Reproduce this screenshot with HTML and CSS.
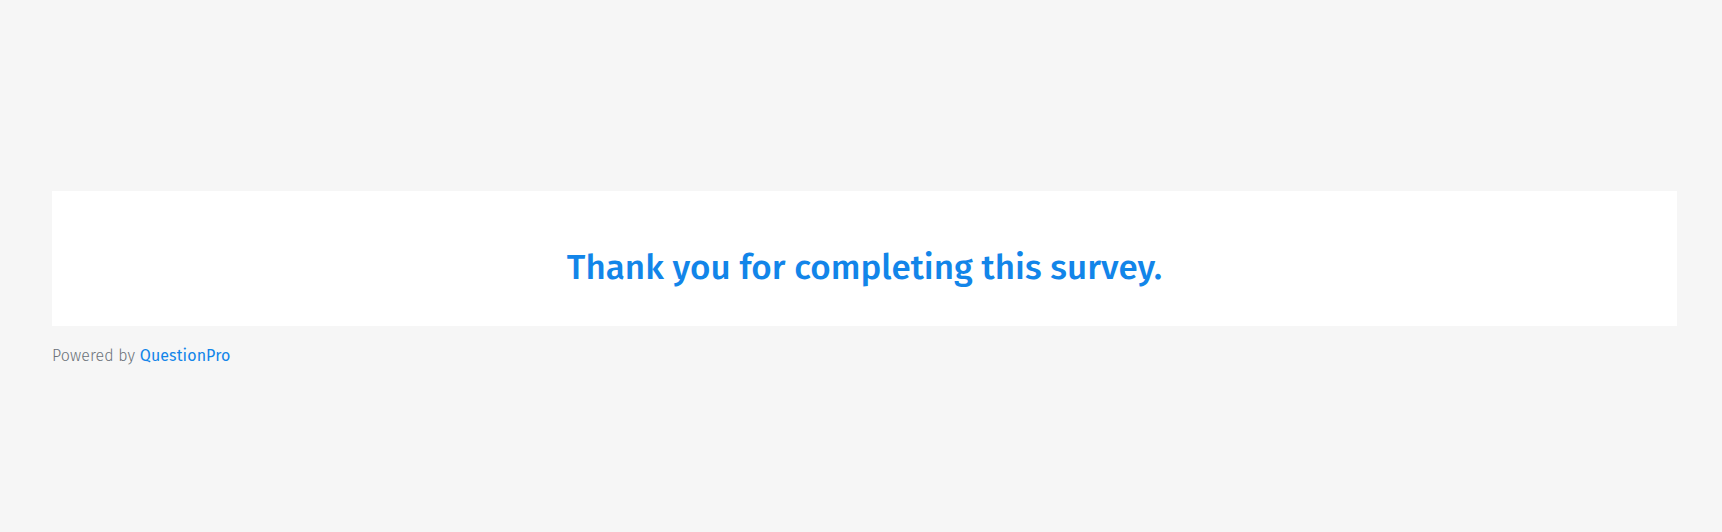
FILE: index.html
```html
<!DOCTYPE html>
<html lang="en">
<head>
  <meta charset="UTF-8" />
  <meta name="viewport" content="width=device-width, initial-scale=1.0"/>
  <title>Survey Complete</title>
  <link rel="stylesheet" href="styles.css">
</head>
<body>
  <div class="page">
    <div class="card">
      <h1 class="thanks">Thank you for completing this survey.</h1>
    </div>
    <p class="powered">Powered by <a href="#" class="brand">QuestionPro</a></p>
  </div>
</body>
</html>
```

FILE: styles.css
```css
* {
  box-sizing: border-box;
}
body {
  margin: 0;
  font-family: "Fira Sans", Lato, "Open Sans", sans-serif;
  background: #f6f6f6;
  color: #333;
}

.page {
  padding: 191px 45px 0 52px;
}

.card {
  background: #fff;
  padding: 56px 20px 39px;
}

.thanks {
  margin: 0;
  font-size: 35px;
  line-height: 40px;
  font-weight: 500;
  color: #1285e9;
  text-align: center;
}

.powered {
  margin: 19px 0 0;
  font-size: 16px;
  line-height: 22px;
  font-weight: 300;
  letter-spacing: 0.1px;
  color: #6b7279;
}

.brand {
  color: #1285e9;
  font-weight: 400;
  text-decoration: none;
}
```
